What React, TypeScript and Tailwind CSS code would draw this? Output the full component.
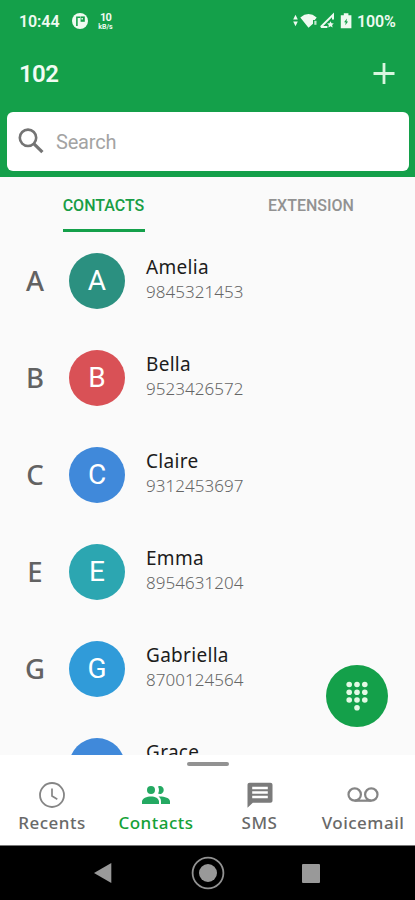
import React from "react";

type Contact = { letter: string; name: string; number?: string; color: string };

const contacts: Contact[] = [
  { letter: "A", name: "Amelia", number: "9845321453", color: "bg-[#2b9080]" },
  { letter: "B", name: "Bella", number: "9523426572", color: "bg-[#d95156]" },
  { letter: "C", name: "Claire", number: "9312453697", color: "bg-[#4089da]" },
  { letter: "E", name: "Emma", number: "8954631204", color: "bg-[#2ca6b1]" },
  { letter: "G", name: "Gabriella", number: "8700124564", color: "bg-[#309bd9]" },
  { letter: "", name: "Grace", color: "bg-[#4089da]" },
];

function StatusBar() {
  return (
    <div className="flex h-[42px] items-center pt-px pl-[19px] pr-[19px] font-['Roboto',sans-serif] text-[16px] font-semibold text-[#effaf1]">
      <span className="w-[53px] tracking-[-0.1px]">10:44</span>
      <svg className="mb-px h-[16px] w-[16px]" viewBox="0 0 16 16">
        <circle cx="8" cy="8" r="8" fill="#effaf1" />
        <path d="M4.9 13V4.200h3.400" fill="none" stroke="#14a049" strokeWidth="1.600" />
        <path d="M8.600 3.400h4.200v5.400H8.600z" fill="#14a049" />
        <path d="M9.400 5h1.500v1.600H9.400z" fill="#effaf1" />
      </svg>
      <div className="ml-[9px] flex w-[17px] flex-col items-center font-bold">
        <span className="text-[11px] leading-[11px] tracking-[-0.8px]">10</span>
        <span className="text-[7px] leading-[8px]">kB/s</span>
      </div>
      <svg className="mb-px ml-auto h-[18px] w-[66px]" viewBox="0 0 66 18" fill="#effaf1">
        <path d="M3.500 2.800 5.800 7.600H1.200zM3.500 14.200 1.200 9.400h4.600z" />
        <path d="M8.300 5.500Q16.500-1.300 24.700 5.500L22.800 8H21v3.700l-4.500 4.100z" />
        <path d="M22.300 8.800h2.200v4h-2.200z" opacity=".8" />
        <path d="M28.800 15 41 2.900v4.600M28.800 15h6.600" fill="none" stroke="#effaf1" strokeWidth="2" />
        <path d="m38.500 9.200 1 2 2.300.3-1.700 1.600.5 2.400-2.100-1.200-2.100 1.200.4-2.400-1.700-1.600 2.400-.3z" />
        <path fillRule="evenodd" d="M51.800 1.200h4.600v2h3v13.100H48.800V3.200h3zM54.900 6.500l-2.800 3.700h1.600l-.4 3 2.800-3.800h-1.600z" />
      </svg>
      <span className="ml-[-1px] w-[39px] tracking-[-0.1px] whitespace-nowrap">100%</span>
    </div>
  );
}

function ContactRow({ c }: { c: Contact }) {
  return (
    <li className="flex h-[97px] shrink-0 items-center">
      <span className="w-[70px] text-center font-['Noto_Sans',sans-serif] text-[27.5px] leading-none font-medium text-[#626262]">
        {c.letter}
      </span>
      <span
        className={`flex h-[56px] w-[56px] -ml-px items-center justify-center rounded-full font-['Roboto',sans-serif] text-[28px] leading-none text-white ${c.color}`}
      >
        {c.letter}
      </span>
      <div className="ml-[21px] flex flex-col pb-[3px] font-['Noto_Sans',sans-serif]">
        <span className="text-[19px] leading-[25px] tracking-[0.3px] text-[#1c1c1c]">{c.name}</span>
        <span className="h-[24px] text-[17px] leading-[24px] font-light tracking-[0.03px] text-[#666]">{c.number}</span>
      </div>
    </li>
  );
}

function NavItem({ label, active, width, children }: { label: string; active?: boolean; width: string; children: React.ReactNode }) {
  return (
    <div className={`flex flex-col items-center ${width} ${active ? "text-[#14a136]" : "text-[#696969]"}`}>
      <div className="flex h-[30px] items-center">{children}</div>
      <span className="font-['Noto_Sans',sans-serif] text-[17px] leading-[26px] font-medium tracking-[0.5px] whitespace-nowrap">{label}</span>
    </div>
  );
}

export default function App() {
  return (
    <div className="flex h-[900px] w-[415px] flex-col overflow-hidden bg-[#fafafa]">
      <header className="flex h-[177px] shrink-0 flex-col bg-[#14a04a]">
        <StatusBar />
        <div className="flex h-[70px] items-center justify-between pb-[6px] pl-[19px] pr-[20px]">
          <h1 className="font-['Roboto',sans-serif] text-[24px] font-semibold tracking-[-0.6px] text-[#f1fbf3]">102</h1>
          <svg className="mt-[-2px] h-[21px] w-[22px]" viewBox="0 0 22 21">
            <path d="M11 0v21M.5 10.500h21" stroke="#d9f6df" strokeWidth="2.800" />
          </svg>
        </div>
        <div className="mr-[6px] ml-[7px] flex h-[59px] items-center rounded-[6px] bg-white pl-[11px]">
          <svg className="mb-[2px] h-[26px] w-[26px]" viewBox="0 0 26 26" fill="none" stroke="#747474">
            <circle cx="10" cy="9.800" r="8.200" strokeWidth="2.600" />
            <path d="m16 15.800 8.400 8.400" strokeWidth="3.200" />
          </svg>
          <span className="ml-[12px] font-['Roboto',sans-serif] text-[20px] tracking-[-0.2px] text-[#a3a3a3]">Search</span>
        </div>
      </header>

      <nav className="flex h-[55px] shrink-0 font-['Roboto',sans-serif] text-[16px] leading-[57px] font-medium">
        <div className="flex w-[207px] justify-center">
          <span className="h-[55px] w-[82px] border-b-[3px] border-[#14a04a] text-center whitespace-nowrap text-[#189d45]">CONTACTS</span>
        </div>
        <div className="w-[208px] text-center text-[#929292]">EXTENSION</div>
      </nav>

      <main className="relative h-[523px] shrink-0 overflow-hidden">
        <ul className="flex flex-col">
          {contacts.map((c) => (
            <ContactRow key={c.name} c={c} />
          ))}
        </ul>
        <button className="absolute top-[433px] left-[325.5px] flex h-[62px] w-[62px] items-center justify-center rounded-full bg-[#14a04a]">
          <svg className="h-[30px] w-[22px]" viewBox="0 0 22 30" fill="#e3f9e5">
            {[3.2, 11, 18.8].map((x) =>
              [3.5, 11.3, 19].map((y) => <circle key={`${x}-${y}`} cx={x} cy={y} r="2.8" />),
            )}
            <circle cx="11" cy="26.800" r="2.800" />
          </svg>
        </button>
      </main>

      <footer className="flex h-[91px] shrink-0 flex-col border-b border-[#777] bg-white">
        <div className="mt-[7px] ml-[187px] h-[4px] w-[42px] rounded-full bg-[#929292]" />
        <div className="mt-[14px] flex">
          <NavItem label="Recents" width="w-[104px]">
            <svg className="h-[26px] w-[26px]" viewBox="0 0 26 26" fill="none" stroke="#858585">
              <circle cx="13" cy="13" r="12" strokeWidth="1.800" />
              <path d="M13 6.500V14l5.300 3.200" strokeWidth="1.700" />
            </svg>
          </NavItem>
          <NavItem label="Contacts" active width="w-[104px]">
            <svg className="h-[18px] w-[28px]" viewBox="0 0 28 18" fill="#24a962">
              <circle cx="9" cy="4" r="4" />
              <path d="M16 .4a4 4 0 1 1 0 7.200c1.300-2 1.300-5.200 0-7.200z" />
              <path d="M0 18v-2.600c0-3.100 5-5 9-5s8 1.900 8 5V18zM19 18v-2.600c0-2-1-3.700-2.400-4.800 4.900-.3 11.400 1.200 11.400 4.800V18z" />
            </svg>
          </NavItem>
          <NavItem label="SMS" width="w-[103px]">
            <svg className="h-[26px] w-[26px]" viewBox="0 0 26 26">
              <path d="M2.700.7h20.600c1.400 0 2.200.9 2.200 2.200v15.700c0 1.400-.8 2.200-2.200 2.200H5.800L.5 25.700V2.900C.5 1.600 1.300.7 2.700.7z" fill="#7b7b7b" />
              <path d="M5.200 6h15.600M5.200 10.500h15.600M5.200 15h15.600" stroke="#fff" strokeWidth="2.700" />
            </svg>
          </NavItem>
          <NavItem label="Voicemail" width="w-[104px]">
            <svg className="mb-[2px] h-[15px] w-[32px]" viewBox="0 0 32 15" fill="none" stroke="#858585" strokeWidth="2.200">
              <circle cx="7.700" cy="7.500" r="6.200" />
              <circle cx="24.300" cy="7.500" r="6.200" />
              <path d="M7.700 13.700h16.600" />
            </svg>
          </NavItem>
        </div>
      </footer>

      <div className="flex h-[54px] shrink-0 items-center bg-black">
        <svg className="ml-[94px] h-[20px] w-[18px]" viewBox="0 0 18 20">
          <path d="M0 10 17.300 0v20z" fill="#999" />
        </svg>
        <svg className="ml-[79px] h-[34px] w-[34px]" viewBox="0 0 34 34">
          <circle cx="17" cy="17" r="15.400" fill="none" stroke="#929292" strokeWidth="1.800" />
          <circle cx="17" cy="17" r="9" fill="#999" />
        </svg>
        <div className="ml-[77px] h-[19px] w-[18px] rounded-[1px] bg-[#999]" />
      </div>
    </div>
  );
}
